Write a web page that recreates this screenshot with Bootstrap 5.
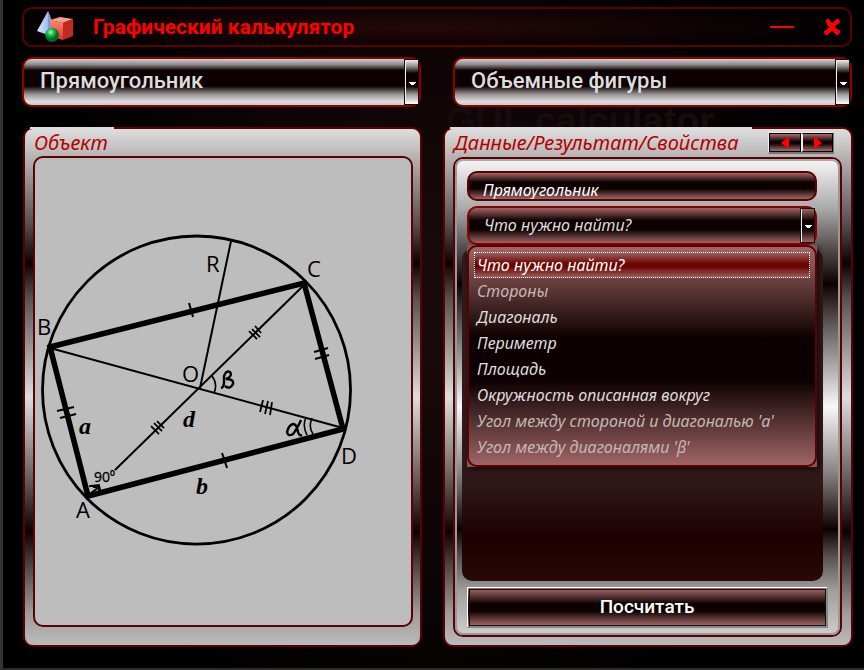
<!DOCTYPE html>
<html lang="ru">
<head>
<meta charset="utf-8">
<meta name="viewport" content="width=device-width, initial-scale=1">
<title>Графический калькулятор</title>
<link href="https://cdn.jsdelivr.net/npm/bootstrap@5.3.0/dist/css/bootstrap.min.css" rel="stylesheet">
<style>
:root{--hand:"Noto Sans","Open Sans",sans-serif;--head:Roboto,"Open Sans",sans-serif;--wine:#5c0000}
body{min-height:100vh;color:#ddd;font-family:var(--hand);border-left:3px solid #333;border-bottom:2px solid #2b2b2b;
 background:radial-gradient(ellipse 420px 460px at 50% 45%,#1b0a0b,#100506 45%,#000) #000}
.shell{padding:7px 12px 20px 19px}
.titlebar{height:40px;border:2px solid var(--wine);border-radius:10px;padding:0 8px 0 12px;
 background:radial-gradient(ellipse 55% 75% at 48% 50%,#260809,#000)}
.titlebar h1{font:700 21px/36px var(--head);color:#f00;margin-left:17px}
.wbtn{background:none;border:0;padding:0;line-height:0}
.wbtn+.wbtn{margin-left:27px}
.pickers{margin-top:10px;gap:32px}
.combo{flex:1 1 0;border:2px solid #8c0000;border-radius:10px;height:50px;position:relative;
 background:linear-gradient(#d0d0d0 0,#8b8888 12%,#0d0000 25%,#0d0000 59%,#989595 77%,#ddd 92%,#ccc)}
.combo .form-select{height:100%;border:0;background:none;box-shadow:none;color:#ddd;font:500 22px/44px var(--head);padding:0 20px 2px 16px;border-radius:8px}
.combo .form-select option{background:#200;color:#ddd}
.combo::after{content:"";position:absolute;right:0;top:0;bottom:0;width:15px;pointer-events:none;border:1px solid #fff;border-left:2px solid #eee;outline:1px solid #111;outline-offset:-1px;
 background:linear-gradient(90deg,#fff,#fff) 3px 50%/7px 1px no-repeat,linear-gradient(90deg,#fff,#fff) 4px calc(50% + 1px)/5px 1px no-repeat,linear-gradient(90deg,#fff,#fff) 5px calc(50% + 2px)/3px 1px no-repeat,linear-gradient(#eee,#8b8888 15%,#0d0000 30%,#0d0000 60%,#999 78%,#fff)}
.ghost{position:absolute;z-index:0;left:446px;top:99px;font:700 38px/44px "Liberation Sans",sans-serif;color:#150c0e}
.panels{position:relative;z-index:1;margin:20px -1px 0 1px;gap:21px}
.pane{border:2px solid var(--wine);border-radius:10px;
 background:linear-gradient(#dedede,#aaa7a6 7%,#5a5252 18%,#0d0000 26%,#5a5252 33%,#ddd 52%,#746c6c 66%,#0d0000 78%,#5a5252 86%,#a09d9a 94%,#bbb)}
.pane-l{flex:399 1 0}.pane-r{flex:410 1 0}
.pane h2{margin:-2px 0 0 5px;padding:0 14px 0 4px;border-top:2px solid #dcdcdc;font:italic 400 20px/27px var(--hand);color:#b40000}
.pane-l h2{width:84px;padding-right:0}
.board{margin:0 7px 17px 8px;border:2px solid var(--wine);border-radius:10px;background:#bdbdbd;overflow:hidden}
.board svg{display:block;width:100%;height:auto}
.stepper{margin:3px 17px 2px 0;border:1px solid #eee;border-right-color:#777;border-bottom:2px solid #777}
.stepper button{width:32px;height:19px;border:1px solid #000;padding:0;line-height:0;background:linear-gradient(#a76c6c,#0d0000 45%,#0d0000 55%,#a76c6c)}
.stepper button+button{border-left:2px solid #eee}
.desk{margin:1px 9px 8px 8px;border:2px solid var(--wine);border-radius:10px}
.desk-in{border:2px solid #999;border-top-color:#aaa;border-radius:8px;padding:10px 10px 5px;
 background:linear-gradient(#f4f4f4,#aaa 10%,#5a5252 18%,#0d0000 26%,#5a5252 34%,#f8f8f8 52%,#8a8383 66%,#0d0000 78%,#5a5252 84%,#a09d9a 91%,#ccc)}
.fields{margin-right:11px;position:relative;z-index:2}
.fields .form-control{height:30px;border:2px solid var(--wine);border-radius:10px;padding:8px 14px 0;font:italic 400 16px/18px var(--hand);color:#fff;
 background:linear-gradient(#a06565,#0d0000 36%,#0d0000 60%,#a06565);box-shadow:none}
.fields .combo{height:39px;margin-top:5px;background:linear-gradient(#a06565,#0d0000 36%,#0d0000 62%,#a06565)}
.fields .combo .form-select{font:italic 400 16px/35px var(--hand);padding:0 20px 0 15px}
.fields .combo::after{background:linear-gradient(90deg,#fff,#fff) 3px 50%/7px 1px no-repeat,linear-gradient(90deg,#fff,#fff) 4px calc(50% + 1px)/5px 1px no-repeat,linear-gradient(90deg,#fff,#fff) 5px calc(50% + 2px)/3px 1px no-repeat,linear-gradient(#a06565,#0d0000 36%,#0d0000 62%,#a06565)}
.fields .dropdown-menu{top:100%;left:0;width:100%;padding:0;border:0;border-radius:0;background:#8d5252;box-shadow:2px 2px 5px #0009}
.choices{border:2px solid var(--wine);border-radius:10px;padding:5px;background:linear-gradient(#a06565,#0d0000 42%,#0d0000 61%,#a06565)}
.choices .dropdown-item{height:26px;padding:0 3px;font:italic 400 16px/25px var(--hand);color:#ddd}
.choices .dropdown-item.dim{color:#c2b8b8}
.choices .dropdown-item.active{color:#fff;background:linear-gradient(#a06565,#6b0500 45%,#6b0500 58%,#a06565);outline:1px dotted #fff;outline-offset:-1px}
.well-box{height:332px;margin:4px 5px 6px -5px;border-radius:10px;background:linear-gradient(#301a1b,#301819 70%,#1e0001 87%,#290a0b)}
.calc{height:41px;border:1px solid #fff;border-right:2px solid #888;border-bottom:2px solid #888;outline:1px solid #111;outline-offset:-3px;border-radius:0;color:#fff;font:500 19px/36px var(--head);padding:0;
 background:linear-gradient(#a76c6c,#0d0000 42%,#0d0000 60%,#a76c6c)}
.calc:hover{color:#fff;background:linear-gradient(#b77c7c,#200 42%,#200 60%,#b77c7c)}
.lbl{font:22px "Open Sans",sans-serif}.side{font:italic 700 24px "Liberation Serif",serif}
</style>
</head>
<body>
<div class="ghost" aria-hidden="true">GUI_calculator</div>
<main class="shell">
 <header class="titlebar d-flex align-items-center">
  <svg width="40" height="34" viewBox="36 10 40 34" aria-hidden="true">
   <defs>
    <linearGradient id="cone"><stop stop-color="#dce8ff"/><stop offset=".55" stop-color="#a9c0f2"/><stop offset="1" stop-color="#4c69b8"/></linearGradient>
    <linearGradient id="cube" x2="0" y2="1"><stop stop-color="#ff8a78"/><stop offset="1" stop-color="#d93425"/></linearGradient>
    <radialGradient id="ball" cx=".4" cy=".3"><stop stop-color="#a5ffb0"/><stop offset=".5" stop-color="#18b84a"/><stop offset="1" stop-color="#006a24"/></radialGradient>
   </defs>
   <path d="M48 11 L37 31 L48 35 L55 29Z" fill="url(#cone)"/><path d="M48 11L48 35L55 29Z" fill="#7e9be0"/>
   <path d="M50 20L60 17L73 19L63 23Z" fill="#ff9b8a"/><path d="M50 20L63 23V40L51 37Z" fill="url(#cube)"/><path d="M63 23L73 19V36L63 40Z" fill="#c22a20"/>
   <circle cx="52" cy="35" r="7" fill="url(#ball)"/>
  </svg>
  <h1 class="mb-0 me-auto">Графический калькулятор</h1>
  <button class="wbtn" type="button" aria-label="Свернуть"><svg width="26" height="18"><path d="M1 9H25" stroke="#f00" stroke-width="2"/></svg></button>
  <button class="wbtn" type="button" aria-label="Закрыть"><svg width="20" height="18" viewBox="0 0 20 18"><path d="M6 1Q8 3 10 6Q13 2 16 1L18 4Q14 6 12 9Q15 12 18 13L16 17Q12 15 10 12Q7 16 4 17L2 14Q5 12 8 9Q5 7 4 3Z" fill="#f00" stroke="#f00"/></svg></button>
 </header>

 <div class="pickers d-flex">
  <div class="combo"><select class="form-select" aria-label="Плоская фигура"><option>Прямоугольник</option></select></div>
  <div class="combo"><select class="form-select" aria-label="Объемная фигура"><option>Объемные фигуры</option></select></div>
 </div>

 <div class="panels d-flex">
  <section class="pane pane-l">
   <h2>Объект</h2>
   <div class="board">
    <svg viewBox="35 158 376 467" role="img" aria-label="Прямоугольник, вписанный в окружность">
     <g fill="none" stroke="#000">
      <ellipse cx="196.500" cy="390" rx="154" ry="154" stroke-width="2.800"/>
      <path d="M50 347L304 283L343 429L88 496Z" stroke-width="5.500"/>
      <path d="M50 348L343 428M304 285L115 470M231 241L200 388" stroke-width="2"/>
      <path d="M189 303L193 317M222 453L227 468M314 352L328 348M315 359L329 355M57 411L74 407M60 418L76 414" stroke-width="2"/>
      <path d="M249 331L257 339M252 329L260 337M255 326L261 333M151 426L159 434M154 423L162 431M157 421L164 428M263 400L260 412M268 401L265 414M272 402L270 415" stroke-width="1.800"/>
      <path d="M212 376Q218 384 214 393M306 417Q302 426 307 435M312 418Q308 427 313 434" stroke-width="1.600"/>
      <path d="M89 486L99 485L101 494M91 493L99 487M93 487H99V492" stroke-width="1.800"/>
      <path d="M221 388Q224 387 224 382V376Q226 370 230 372Q233 376 226 379Q234 379 233 384Q230 390 225 386" stroke-width="2.400"/>
      <path d="M301 420Q297 429 293 434Q288 437 287 432Q289 424 294 424Q297 425 298 432Q299 436 302 435" stroke-width="2.400"/>
     </g>
     <g class="lbl"><text x="206" y="272">R</text><text x="307" y="277">C</text><text x="37" y="335">B</text><text x="182" y="382">O</text><text x="76" y="518">A</text><text x="341" y="464">D</text></g>
     <text x="94" y="482" font-size="14" font-family="Open Sans, sans-serif" stroke="#000" stroke-width=".3">90⁰</text>
     <g class="side"><text x="79" y="434">a</text><text x="183" y="427">d</text><text x="196" y="494">b</text></g>
    </svg>
   </div>
  </section>

  <section class="pane pane-r">
   <div class="d-flex justify-content-between align-items-start">
    <h2>Данные/Результат/Свойства</h2>
    <div class="stepper d-flex">
     <button type="button" aria-label="Назад"><svg width="8" height="13"><path d="M8 0V13L0 7Z" fill="#f00"/></svg></button>
     <button type="button" aria-label="Вперёд"><svg width="8" height="13"><path d="M0 0V13L8 7Z" fill="#f00"/></svg></button>
    </div>
   </div>
   <div class="desk"><div class="desk-in">
    <div class="fields">
     <input class="form-control" type="text" value="Прямоугольник" aria-label="Фигура">
     <div class="combo"><select class="form-select" aria-label="Искомая величина"><option>Что нужно найти?</option></select></div>
     <div class="dropdown-menu show"><div class="choices">
      <button class="dropdown-item active" type="button">Что нужно найти?</button>
      <button class="dropdown-item dim" type="button">Стороны</button>
      <button class="dropdown-item" type="button">Диагональ</button>
      <button class="dropdown-item" type="button">Периметр</button>
      <button class="dropdown-item" type="button">Площадь</button>
      <button class="dropdown-item" type="button">Окружность описанная вокруг</button>
      <button class="dropdown-item dim" type="button">Угол между стороной и диагональю 'a'</button>
      <button class="dropdown-item dim" type="button">Угол между диагоналями 'β'</button>
     </div></div>
    </div>
    <div class="well-box"></div>
    <button class="btn calc d-block w-100" type="button">Посчитать</button>
   </div></div>
  </section>
 </div>
</main>
<script src="https://cdn.jsdelivr.net/npm/bootstrap@5.3.0/dist/js/bootstrap.bundle.min.js"></script>
</body>
</html>
